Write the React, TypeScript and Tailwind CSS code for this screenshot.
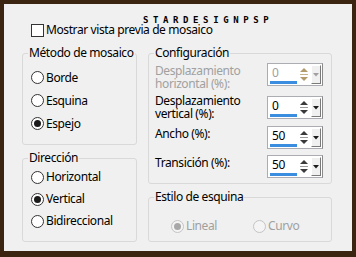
import React from "react";

const font = { fontFamily: '"Noto Sans", "Liberation Sans", sans-serif' };

function Radio({ label, checked = false, disabled = false, className = "" }: { label: string; checked?: boolean; disabled?: boolean; className?: string }) {
  return (
    <div className={`flex h-[22px] items-center ${className}`}>
      <div
        className={`flex h-[13px] w-[13px] shrink-0 items-center justify-center rounded-full border ${
          disabled ? "border-[#c4c4c4] bg-[#f4f4f4]" : "border-[#333333] bg-white"
        }`}
      >
        {checked && <div className={`h-[7px] w-[7px] rounded-full ${disabled ? "bg-[#a8a8a8]" : "bg-[#1b1b1b]"}`} />}
      </div>
      <span className={`ml-[2px] whitespace-nowrap text-[12px] leading-[14px] ${disabled ? "text-[#a0a0a0]" : "text-black"}`}>{label}</span>
    </div>
  );
}

function Spin({ value, disabled = false }: { value: string; disabled?: boolean }) {
  const arrow = disabled ? "#b39a6a" : "#3a3a3a";
  return (
    <div className="flex h-[23px] w-[56px] shrink-0 border border-[#abadb3] border-r-[#8a8a8a] bg-white">
      <div className="flex w-[29px] flex-col pl-[2px] pt-[2px]">
        <span className={`pl-[2px] text-[12px] leading-[14px] ${disabled ? "text-[#a0a0a0]" : "text-black"}`}>{value}</span>
        <div className="mt-auto mb-[1px] h-[3px] bg-[#3b8ddf]" />
      </div>
      <div className="flex w-[14px] items-center justify-center">
        <svg width="10" height="15" viewBox="0 0 10 15">
          <path d="M5 1 L9 5 L1 5 Z" fill={arrow} />
          <line x1="1" y1="7.5" x2="9" y2="7.5" stroke={disabled ? "#c8b48a" : "#9a9a9a"} strokeWidth="1" />
          <path d="M1 10 L9 10 L5 14 Z" fill={arrow} />
        </svg>
      </div>
      <div className="my-[1px] flex w-[10px] items-center justify-center border border-t-white border-l-white border-r-[#7a7a7a] border-b-[#7a7a7a] bg-[#f0f0f0]">
        <svg width="6" height="4" viewBox="0 0 6 4">
          <path d="M0 0 L6 0 L3 3.5 Z" fill={disabled ? "#a0a0a0" : "#1b1b1b"} />
        </svg>
      </div>
    </div>
  );
}

function Group({ title, className = "", children }: { title: string; className?: string; children: React.ReactNode }) {
  return (
    <fieldset className={`rounded-[3px] border border-[#d9d9d9] ${className}`}>
      <legend className="ml-[5px] whitespace-nowrap px-[1px] text-[12px] leading-[16px] text-black">{title}</legend>
      {children}
    </fieldset>
  );
}

export default function App() {
  return (
    <div className="h-[257px] w-[356px] bg-[#3b2511] pt-[4px] pl-[4px] pr-[4px] pb-[6px] tracking-[-0.4px]" style={font}>
      <div className="relative h-full w-full bg-[#f0f0f0] pl-[18px] pt-[18px]">
        {/* watermark */}
        <div className="absolute left-[139px] top-[12px] text-[9px] font-bold leading-[9px] tracking-[4.6px] text-black" style={{ fontFamily: '"DejaVu Sans Mono", monospace' }}>
          STARDESIGNPSP
        </div>

        <div className="flex h-[16px] items-center pl-[9px]">
          <div className="h-[13px] w-[13px] border border-[#333333] bg-white" />
          <span className="ml-[2px] whitespace-nowrap text-[12px] leading-[14px] text-black">Mostrar vista previa de mosaico</span>
        </div>

        <div className="mt-[7px] flex gap-[11px]">
          <div className="flex w-[115px] flex-col gap-[5px]">
            <Group title="Método de mosaico" className="h-[100px]">
              <div className="flex flex-col pl-[8px] pt-[5px]">
                <Radio label="Borde" className="h-[23px]" />
                <Radio label="Esquina" className="h-[23px]" />
                <Radio label="Espejo" checked className="h-[23px]" />
              </div>
            </Group>
            <Group title="Dirección" className="h-[92px]">
              <div className="flex flex-col pl-[8px]">
                <Radio label="Horizontal" />
                <Radio label="Vertical" checked />
                <Radio label="Bidireccional" />
              </div>
            </Group>
          </div>

          <div className="flex w-[184px] flex-col gap-[5px]">
            <Group title="Configuración" className="h-[139px]">
              <div className="flex flex-col gap-[6px] pl-[6px] pr-[8px] pt-[2px] text-[12px] leading-[13px]">
                <div className="flex items-start justify-between">
                  <span className="pt-[1px] text-[#a0a0a0]">
                    Desplazamiento
                    <br />
                    horizontal (%):
                  </span>
                  <Spin value="0" disabled />
                </div>
                <div className="flex items-start justify-between">
                  <span className="-mt-[2px] text-black">
                    Desplazamiento
                    <br />
                    vertical (%):
                  </span>
                  <Spin value="0" />
                </div>
                <div className="flex items-start justify-between">
                  <span className="pt-[1px] text-black">Ancho (%):</span>
                  <Spin value="50" />
                </div>
                <div className="flex items-start justify-between">
                  <span className="pt-[1px] text-black">Transición (%):</span>
                  <Spin value="50" />
                </div>
              </div>
            </Group>
            <Group title="Estilo de esquina" className="h-[53px]">
              <div className="flex pl-[22px] pt-[10px]">
                <Radio label="Lineal" checked disabled className="w-[82px]" />
                <Radio label="Curvo" disabled />
              </div>
            </Group>
          </div>
        </div>
      </div>
    </div>
  );
}
